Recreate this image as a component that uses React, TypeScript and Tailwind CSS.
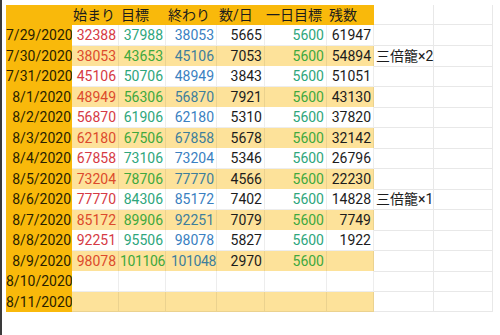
import React from 'react';

type Row = {
  date: string;
  start?: string;
  goal?: string;
  end?: string;
  perDay?: string;
  dayGoal?: string;
  left?: string;
  note?: string;
};

const rows: Row[] = [
  { date: '7/29/2020', start: '32388', goal: '37988', end: '38053', perDay: '5665', dayGoal: '5600', left: '61947' },
  { date: '7/30/2020', start: '38053', goal: '43653', end: '45106', perDay: '7053', dayGoal: '5600', left: '54894', note: '三倍籠×2' },
  { date: '7/31/2020', start: '45106', goal: '50706', end: '48949', perDay: '3843', dayGoal: '5600', left: '51051' },
  { date: '8/1/2020', start: '48949', goal: '56306', end: '56870', perDay: '7921', dayGoal: '5600', left: '43130' },
  { date: '8/2/2020', start: '56870', goal: '61906', end: '62180', perDay: '5310', dayGoal: '5600', left: '37820' },
  { date: '8/3/2020', start: '62180', goal: '67506', end: '67858', perDay: '5678', dayGoal: '5600', left: '32142' },
  { date: '8/4/2020', start: '67858', goal: '73106', end: '73204', perDay: '5346', dayGoal: '5600', left: '26796' },
  { date: '8/5/2020', start: '73204', goal: '78706', end: '77770', perDay: '4566', dayGoal: '5600', left: '22230' },
  { date: '8/6/2020', start: '77770', goal: '84306', end: '85172', perDay: '7402', dayGoal: '5600', left: '14828', note: '三倍籠×1' },
  { date: '8/7/2020', start: '85172', goal: '89906', end: '92251', perDay: '7079', dayGoal: '5600', left: '7749' },
  { date: '8/8/2020', start: '92251', goal: '95506', end: '98078', perDay: '5827', dayGoal: '5600', left: '1922' },
  { date: '8/9/2020', start: '98078', goal: '101106', end: '101048', perDay: '2970', dayGoal: '5600' },
  { date: '8/10/2020' },
  { date: '8/11/2020' },
];

const cols = 'grid grid-cols-[66px_47px_47px_51px_48px_62px_47px_60px_59px]';

// six-digit values are squeezed a little so they stay inside their cell
const Cell = ({ children, className = '' }: { children?: React.ReactNode; className?: string }) => {
  const wide = typeof children === 'string' && children.length > 5;
  return (
    <div
      className={`border-r border-b border-black/[0.07] text-right whitespace-nowrap ${
        wide ? 'pr-0 tracking-[-0.35px]' : 'pr-[2px]'
      } ${className}`}
    >
      {children}
    </div>
  );
};

export default function App() {
  return (
    <div
      className="w-[500px] h-[335px] bg-white flex text-[14px] text-[#1c1c1c] overflow-hidden"
      style={{ fontFamily: 'Roboto, "Noto Sans CJK JP", sans-serif' }}
    >
      <div className="w-[2px] h-full bg-[#3a3a3a]" />
      <div className="pl-[4px] pt-[5px]">
        <div className={`${cols} h-[20px] leading-[20px]`}>
          <div className="bg-[#f9b90b]" />
          <div className="bg-[#f9b90b] pl-[1px]">始まり</div>
          <div className="bg-[#f9b90b] pl-[2px]">目標</div>
          <div className="bg-[#f9b90b] pl-[2px]">終わり</div>
          <div className="bg-[#f9b90b] pl-[2px]">数/日</div>
          <div className="bg-[#f9b90b] pl-[1px]">一日目標</div>
          <div className="bg-[#f9b90b] pl-[2px]">残数</div>
          <div className="border-r border-b border-[#e8e8e8]" />
          <div className="border-r border-b border-[#e8e8e8]" />
        </div>
        {rows.map((r, i) => {
          const alt = i % 2 === 1;
          const bg = alt ? 'bg-[#fde29a]' : 'bg-white';
          return (
            <div key={r.date} className={`${cols} h-[20.5px] leading-[20px]`}>
              <div className="bg-[#f9b90b] text-right pr-[1px] text-[#2a1f00]">{r.date}</div>
              <Cell className={`${bg} ${alt ? 'text-[#dc4a2c]' : 'text-[#d63a44]'}`}>{r.start}</Cell>
              <Cell className={`${bg} ${alt ? 'text-[#3fa83e]' : 'text-[#2ea67c]'}`}>{r.goal}</Cell>
              <Cell className={`${bg} ${alt ? 'text-[#3d7e9c]' : 'text-[#3a7fc1]'}`}>{r.end}</Cell>
              <Cell className={`${bg} text-[#1c1c1c]`}>{r.perDay}</Cell>
              <Cell className={`${bg} ${alt ? 'text-[#3fa83e]' : 'text-[#2ea67c]'}`}>{r.dayGoal}</Cell>
              <Cell className={`${bg} text-[#1c1c1c]`}>{r.left}</Cell>
              <div className="border-r border-b border-[#e8e8e8] pl-[2px] whitespace-nowrap text-[#1c1c1c]">
                {r.note}
              </div>
              <div className="border-r border-b border-[#e8e8e8]" />
            </div>
          );
        })}
      </div>
    </div>
  );
}
